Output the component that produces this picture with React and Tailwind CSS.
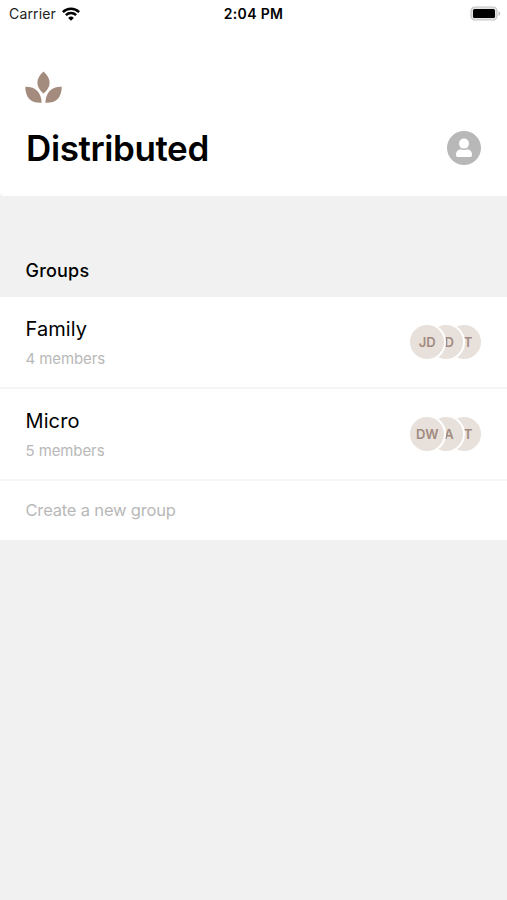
const groups = [
    { name: "Family", members: 4, initials: ["JD", "D", "T"] },
    { name: "Micro", members: 5, initials: ["DW", "A", "T"] },
];

const StatusBar = () => {
    return (
        <div className="grid grid-cols-3 items-center h-[27px] pl-[9px] pr-[6px] text-[14px] leading-[27px] text-[#222]">
            <div className="flex items-center gap-[6px]">
                <span className="tracking-[0.15px]">Carrier</span>
                <svg width="18" height="14" viewBox="0 0 18 14" fill="none" stroke="#000" strokeWidth="2.5">
                    <path d="M0.9 5.1a11.5 11.5 0 0 1 16.2 0" />
                    <path d="M3.9 8.2a7.2 7.2 0 0 1 10.2 0" />
                    <path d="M9 13.7 6.2 10.9a4 4 0 0 1 5.6 0z" fill="#000" stroke="none" />
                </svg>
            </div>
            <span className="-ml-[3px] text-center font-semibold tracking-[0.35px] text-black whitespace-nowrap">
                2:04 PM
            </span>
            <svg className="justify-self-end" width="31" height="15" viewBox="0 0 31 15">
                <rect x="1" y="1" width="26" height="13" rx="4" fill="#e4e4e4" stroke="#c4c4c4" strokeWidth="1.2" />
                <rect x="3" y="3" width="22" height="9" rx="1.5" fill="#000" />
                <path d="M28.6 5.2c2.2 0.8 2.2 3.8 0 4.6z" fill="#bbb" />
            </svg>
        </div>
    );
};

const Logo = () => {
    return (
        <svg width="38" height="33" viewBox="0 0 38 33" fill="#a38b7d">
            <path d="M18.5 0.5C14.5 4.2 12.4 7.8 12.4 11.7c0 3.9 2.4 7.9 6.1 10.8 3.7-2.9 6.1-6.9 6.1-10.8 0-3.9-2.1-7.5-6.1-11.2z" />
            <path d="M0.3 15.7C5.5 15.600 9.800 17 12.600 20.300C15 23.200 16.500 27 16.600 31.700C11.500 31.900 7.300 31 4.300 28C1.500 25 0.300 20.500 0.300 15.700z" />
            <path d="M36.700 15.700C31.500 15.600 27.200 17 24.400 20.300C22 23.200 20.500 27 20.400 31.700C25.500 31.900 29.700 31 32.700 28C35.500 25 36.700 20.500 36.700 15.700z" />
        </svg>
    );
};

const ProfileIcon = () => {
    return (
        <svg width="34" height="34" viewBox="0 0 34 34">
            <circle cx="17" cy="17" r="17" fill="#b8b8b8" />
            <circle cx="17" cy="12.6" r="5" fill="#fff" />
            <path d="M9 23.8c0-3.5 2.200-5.300 4.800-5.300 2 .6 4.400.6 6.400 0 2.600 0 4.800 1.800 4.800 5.300 0 1.400-.7 2.200-1.800 2.200H10.800c-1.100 0-1.800-.8-1.800-2.200z" fill="#fff" />
        </svg>
    );
};

const Avatar = ({ text, className }) => {
    return (
        <div
            className={`relative flex size-[38px] items-center justify-center rounded-full border-2 border-white bg-[#e8e0da] pt-px text-[13px] font-semibold text-[#a18b80] ${className}`}
        >
            {text}
        </div>
    );
};

const Avatars = ({ initials }) => {
    return (
        <div className="flex mr-[24px]">
            <Avatar text={initials[0]} className="z-20" />
            <Avatar text={initials[1]} className="z-10 -ml-[19.6px] pl-[7px]" />
            <Avatar text={initials[2]} className="-ml-[19.6px] pl-[8px]" />
        </div>
    );
};

const App = () => {
    return (
        <div className="min-h-screen bg-[#f1f1f1] font-['Inter',sans-serif] text-black">
            <header className="h-[196px] rounded-bl-[4px] bg-white">
                <StatusBar />
                <div className="pt-[44px] pl-[25px]">
                    <Logo />
                </div>
                <div className="mt-[24px] flex items-center justify-between px-[26px]">
                    <h1 className="text-[35px] leading-[40px] font-semibold tracking-[-0.4px]">
                        Distributed
                    </h1>
                    <ProfileIcon />
                </div>
            </header>

            <h2 className="h-[101px] pt-[62px] pl-[25.5px] text-[18px] leading-[25px] font-medium tracking-[0.2px]">
                Groups
            </h2>

            <div className="bg-white">
                {groups.map((group) => (
                    <div
                        key={group.name}
                        className="flex h-[92px] items-center justify-between border-b-2 border-[#f5f5f5] pl-[25.5px]"
                    >
                        <div className="pt-[4px]">
                            <p className="text-[20px] leading-[28px] tracking-[0.1px]">{group.name}</p>
                            <p className="mt-[2px] text-[15px] leading-[28px] tracking-[-0.1px] text-[#b8b8b8]">
                                {group.members} members
                            </p>
                        </div>
                        <Avatars initials={group.initials} />
                    </div>
                ))}
                <div className="flex h-[59px] items-center pl-[25.5px] text-[16.5px] tracking-[-0.18px] text-[#b8b8b8]">
                    Create a new group
                </div>
            </div>
        </div>
    );
};

export default App;
